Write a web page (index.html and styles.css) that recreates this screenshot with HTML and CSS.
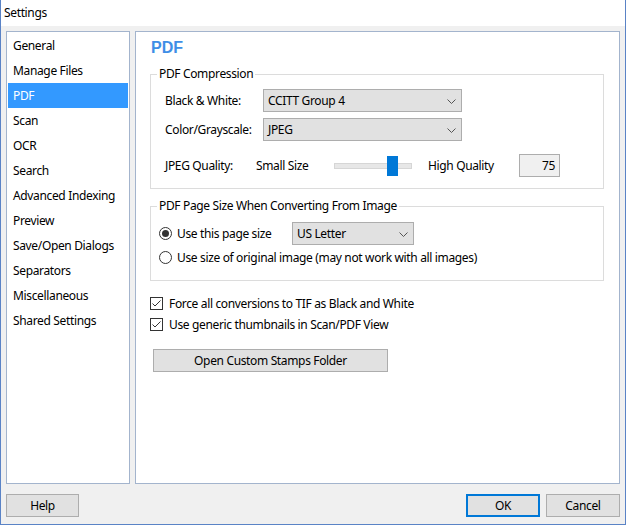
FILE: index.html
```html
<!DOCTYPE html>
<html>
<head>
<meta charset="utf-8">
<link rel="stylesheet" href="styles.css">
</head>
<body>
<div class="window">
  <div class="titlebar">Settings</div>
  <div class="content">
    <div class="main">
      <ul class="nav">
        <li>General</li>
        <li>Manage Files</li>
        <li class="sel">PDF</li>
        <li>Scan</li>
        <li>OCR</li>
        <li>Search</li>
        <li>Advanced Indexing</li>
        <li>Preview</li>
        <li>Save/Open Dialogs</li>
        <li>Separators</li>
        <li>Miscellaneous</li>
        <li>Shared Settings</li>
      </ul>
      <div class="panel">
        <div class="heading">PDF</div>
        <fieldset class="group g1">
          <legend>PDF Compression</legend>
          <div class="row r1">
            <span class="lbl">Black &amp; White:</span>
            <div class="select wide"><span>CCITT Group 4</span><svg class="chev" width="9" height="5" viewBox="0 0 9 5"><polyline points="0.5,0.5 4.5,4.5 8.5,0.5" fill="none" stroke="#555" stroke-width="1"/></svg></div>
          </div>
          <div class="row r2">
            <span class="lbl">Color/Grayscale:</span>
            <div class="select wide"><span>JPEG</span><svg class="chev" width="9" height="5" viewBox="0 0 9 5"><polyline points="0.5,0.5 4.5,4.5 8.5,0.5" fill="none" stroke="#555" stroke-width="1"/></svg></div>
          </div>
          <div class="row r3">
            <span class="lbl2">JPEG Quality:</span>
            <span class="small">Small Size</span>
            <div class="slider"><div class="track"></div><div class="thumb"></div></div>
            <span class="high">High Quality</span>
            <div class="num">75</div>
          </div>
        </fieldset>
        <fieldset class="group g2">
          <legend>PDF Page Size When Converting From Image</legend>
          <div class="row rr1">
            <span class="radio on"></span>
            <span class="rlbl">Use this page size</span>
            <div class="select narrow"><span>US Letter</span><svg class="chev" width="9" height="5" viewBox="0 0 9 5"><polyline points="0.5,0.5 4.5,4.5 8.5,0.5" fill="none" stroke="#555" stroke-width="1"/></svg></div>
          </div>
          <div class="row rr2">
            <span class="radio"></span>
            <span>Use size of original image (may not work with all images)</span>
          </div>
        </fieldset>
        <div class="check c1">
          <svg class="cb" width="13" height="13" viewBox="0 0 13 13"><rect x="0.5" y="0.5" width="12" height="12" fill="#fff" stroke="#333"/><polyline points="2.5,6.5 5,9 10.5,3.5" fill="none" stroke="#333" stroke-width="1"/></svg>
          <span>Force all conversions to TIF as Black and White</span>
        </div>
        <div class="check c2">
          <svg class="cb" width="13" height="13" viewBox="0 0 13 13"><rect x="0.5" y="0.5" width="12" height="12" fill="#fff" stroke="#333"/><polyline points="2.5,6.5 5,9 10.5,3.5" fill="none" stroke="#333" stroke-width="1"/></svg>
          <span>Use generic thumbnails in Scan/PDF View</span>
        </div>
        <div class="btn stamps">Open Custom Stamps Folder</div>
      </div>
    </div>
    <div class="bottom">
      <div class="btn help">Help</div>
      <div class="spacer"></div>
      <div class="btn ok">OK</div>
      <div class="btn cancel">Cancel</div>
    </div>
  </div>
</div>
</body>
</html>
```
FILE: styles.css
```css
* { box-sizing: border-box; }
html, body { margin: 0; padding: 0; }
body {
  width: 626px; height: 525px; overflow: hidden;
  font-family: "Noto Sans", "Liberation Sans", sans-serif;
  font-size: 12px; color: #000; letter-spacing: -0.35px;
}
.window {
  width: 626px; height: 525px;
  border: 1px solid #5a83c6; border-top: none;
  display: flex; flex-direction: column;
  background: #f0f0f0;
}
.titlebar {
  height: 26px; background: #fff;
  padding-left: 3px; line-height: 26px;
  font-size: 12px;
}
.content {
  flex: 1; display: flex; flex-direction: column;
  padding: 5px 5px 7px 5px;
}
.main { display: flex; gap: 5px; height: 453px; }
.nav {
  list-style: none; margin: 0; padding: 1px;
  width: 125px; background: #fff;
  border: 1px solid #a3b4cd;
}
.nav li {
  height: 25px; line-height: 25px; padding-left: 5px; white-space: nowrap;
}
.nav li.sel { background: #3399ff; color: #fff; }
.panel {
  flex: 1; background: #fff; border: 1px solid #a3b4cd;
  padding: 6px 15px 0 14px;
  display: flex; flex-direction: column; align-items: flex-start;
}
.heading {
  font-family: "Liberation Sans", sans-serif; letter-spacing: 0;
  font-weight: bold; font-size: 16px; line-height: 20px;
  color: #3e8ee6; padding-left: 1px;
}
.group {
  margin: 0; border: 1px solid #dcdcdc; width: 454px;
  padding: 0 0 0 14px; min-width: 0;
}
.group legend {
  padding: 0 2px; margin-left: -8px; line-height: 16px;
}
.g1 { margin-top: 8px; padding-bottom: 11px; }
.g2 { margin-top: 9px; padding-left: 8px; padding-bottom: 14px; }
.g2 legend { margin-left: -2px; }
.row { display: flex; align-items: center; }
.r1 { margin-top: 7px; height: 23px; }
.r2 { margin-top: 6px; height: 23px; }
.r3 { margin-top: 13px; height: 23px; }
.lbl { width: 98px; }
.select {
  height: 23px; background: #e1e1e1; border: 1px solid #adadad;
  display: flex; align-items: center; justify-content: space-between;
  padding: 0 5px 0 4px;
}
.wide { width: 199px; }
.narrow { width: 122px; }
.chev { margin-top: 1px; }
.lbl2 { width: 91px; }
.small { width: 78px; }
.slider { position: relative; width: 78px; height: 23px; }
.track {
  position: absolute; left: 0; right: 0; top: 9px; height: 6px;
  background: #e7e7e7; border: 1px solid #d6d6d6;
}
.thumb {
  position: absolute; left: 53px; top: 2px; width: 11px; height: 20px;
  background: #0078d7;
}
.high { margin-left: 16px; width: 91px; }
.num {
  width: 41px; height: 23px; background: #f0f0f0; border: 1px solid #adadad;
  text-align: right; padding-right: 4px; line-height: 21px;
}
.rr1 { margin-top: 8px; height: 23px; }
.rr2 { margin-top: 3px; height: 18px; }
.radio {
  width: 13px; height: 13px; border: 1px solid #333; border-radius: 50%;
  margin-right: 5px; display: flex; align-items: center; justify-content: center;
  background: #fff;
}
.radio.on::after {
  content: ""; width: 7px; height: 7px; border-radius: 50%; background: #333;
}
.rlbl { width: 115px; }
.check { display: flex; align-items: center; height: 18px; }
.check .cb { margin-right: 6px; }
.c1 { margin-top: 13px; }
.c2 { margin-top: 3px; }
.btn {
  height: 23px; background: #e1e1e1; border: 1px solid #adadad;
  display: flex; align-items: center; justify-content: center;
}
.stamps { margin-top: 16px; margin-left: 3px; width: 235px; }
.bottom { display: flex; margin-top: 10px; height: 23px; gap: 6px; }
.spacer { flex: 1; }
.help { width: 73px; }
.ok { width: 74px; border: 2px solid #0078d7; }
.cancel { width: 74px; }
```
